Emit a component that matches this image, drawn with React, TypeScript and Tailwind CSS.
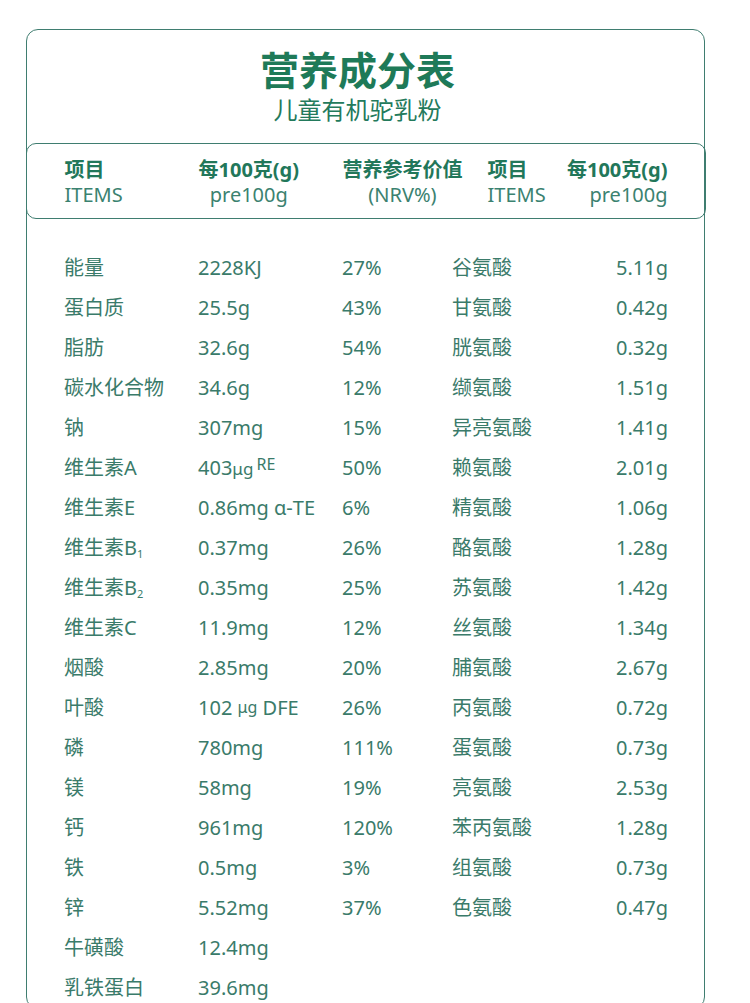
import React from "react";

type Row = [React.ReactNode, React.ReactNode, string?, string?, string?];

const B = ({ n }: { n: string }) => (
  <>
    维生素B<sub className="text-[11px] relative top-[3px] align-baseline">{n}</sub>
  </>
);

const rows: Row[] = [
  ["能量", "2228KJ", "27%", "谷氨酸", "5.11g"],
  ["蛋白质", "25.5g", "43%", "甘氨酸", "0.42g"],
  ["脂肪", "32.6g", "54%", "胱氨酸", "0.32g"],
  ["碳水化合物", "34.6g", "12%", "缬氨酸", "1.51g"],
  ["钠", "307mg", "15%", "异亮氨酸", "1.41g"],
  [
    "维生素A",
    <>
      403<span className="text-[17px]">μg</span>
      <span className="text-[16px] relative -top-[5px] ml-[3px]">RE</span>
    </>,
    "50%",
    "赖氨酸",
    "2.01g",
  ],
  ["维生素E", "0.86mg α-TE", "6%", "精氨酸", "1.06g"],
  [<B n="1" />, "0.37mg", "26%", "酪氨酸", "1.28g"],
  [<B n="2" />, "0.35mg", "25%", "苏氨酸", "1.42g"],
  ["维生素C", "11.9mg", "12%", "丝氨酸", "1.34g"],
  ["烟酸", "2.85mg", "20%", "脯氨酸", "2.67g"],
  [
    "叶酸",
    <>
      102 <span className="text-[16px] relative -top-[2px]">μg</span> DFE
    </>,
    "26%",
    "丙氨酸",
    "0.72g",
  ],
  ["磷", "780mg", "111%", "蛋氨酸", "0.73g"],
  ["镁", "58mg", "19%", "亮氨酸", "2.53g"],
  ["钙", "961mg", "120%", "苯丙氨酸", "1.28g"],
  ["铁", "0.5mg", "3%", "组氨酸", "0.73g"],
  ["锌", "5.52mg", "37%", "色氨酸", "0.47g"],
  ["牛磺酸", "12.4mg"],
  ["乳铁蛋白", "39.6mg"],
];

export default function App() {
  return (
    <div
      className="w-[750px] bg-white pt-[29px] pl-[26px] pr-[45px]"
      style={{ fontFamily: '"Noto Sans", "Noto Sans CJK SC", sans-serif' }}
    >
      <div className="border-[1.5px] border-[#3f7d70] rounded-[12px]">
        <div
          className="pt-[19px] pr-[16px] flex flex-col items-center"
          style={{ fontFamily: '"Noto Sans CJK SC", sans-serif' }}
        >
          <div className="text-[39px] leading-[39px] font-bold text-[#1e7a58]">营养成分表</div>
          <div className="mt-[9px] text-[24px] leading-[24px] text-[#237a5c]">儿童有机驼乳粉</div>
        </div>

        <div className="mt-[22px] -mx-[1.5px] border-[1.5px] border-[#3f7d70] rounded-[10px] pt-[13px] pb-[11px] pl-[38px] pr-[37px]">
          <div className="grid grid-cols-[134px_144px_145px_1fr_auto] text-[20px] leading-[25px]">
            <div className="flex flex-col">
              <span className="font-bold text-[#22775a]">项目</span>
              <span className="text-[#3b8270]">ITEMS</span>
            </div>
            <div className="flex flex-col items-center w-fit">
              <span className="font-bold text-[#22775a]">每100克(g)</span>
              <span className="text-[#3b8270]">pre100g</span>
            </div>
            <div className="flex flex-col items-center w-fit">
              <span className="font-bold text-[#22775a]">营养参考价值</span>
              <span className="text-[#3b8270]">(NRV%)</span>
            </div>
            <div className="flex flex-col">
              <span className="font-bold text-[#22775a]">项目</span>
              <span className="text-[#3b8270]">ITEMS</span>
            </div>
            <div className="flex flex-col items-end">
              <span className="font-bold text-[#22775a]">每100克(g)</span>
              <span className="text-[#3b8270]">pre100g</span>
            </div>
          </div>
        </div>

        <div className="mt-[29px] pl-[37px] pr-[36px] text-[20px] leading-[40px] text-[#3a7b6a]">
          {rows.map((r, i) => (
            <div key={i} className="grid grid-cols-[134px_144px_110px_1fr_auto] h-[40px]">
              <div className="whitespace-nowrap">{r[0]}</div>
              <div className="whitespace-nowrap">{r[1]}</div>
              <div>{r[2] ?? ""}</div>
              <div>{r[3] ?? ""}</div>
              <div className="text-right">{r[4] ?? ""}</div>
            </div>
          ))}
        </div>
      </div>
    </div>
  );
}
